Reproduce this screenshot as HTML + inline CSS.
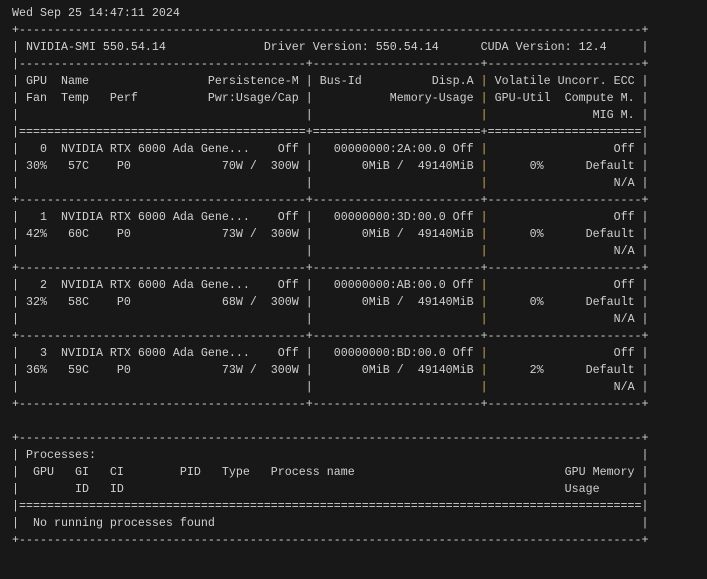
<!DOCTYPE html>
<html><head><meta charset="utf-8"><style>
html,body{margin:0;padding:0;background:#181818;width:707px;height:579px;overflow:hidden}
pre{margin:0;padding:5px 0 0 12px;font-family:"Liberation Mono",monospace;font-size:11.66px;line-height:17px;color:#d0d0d0;white-space:pre}
.y{color:#cfa84f}
</style></head><body><pre>Wed Sep 25 14:47:11 2024
+-----------------------------------------------------------------------------------------+
| NVIDIA-SMI 550.54.14              Driver Version: 550.54.14      CUDA Version: 12.4     |
|-----------------------------------------+------------------------+----------------------+
| GPU  Name                 Persistence-M | Bus-Id          Disp.A <span class="y">|</span> Volatile Uncorr. ECC |
| Fan  Temp   Perf          Pwr:Usage/Cap |           Memory-Usage <span class="y">|</span> GPU-Util  Compute M. |
|                                         |                        <span class="y">|</span>               MIG M. |
|=========================================+========================+======================|
|   0  NVIDIA RTX 6000 Ada Gene...    Off |   00000000:2A:00.0 Off <span class="y">|</span>                  Off |
| 30%   57C    P0             70W /  300W |       0MiB /  49140MiB <span class="y">|</span>      0%      Default |
|                                         |                        <span class="y">|</span>                  N/A |
+-----------------------------------------+------------------------+----------------------+
|   1  NVIDIA RTX 6000 Ada Gene...    Off |   00000000:3D:00.0 Off <span class="y">|</span>                  Off |
| 42%   60C    P0             73W /  300W |       0MiB /  49140MiB <span class="y">|</span>      0%      Default |
|                                         |                        <span class="y">|</span>                  N/A |
+-----------------------------------------+------------------------+----------------------+
|   2  NVIDIA RTX 6000 Ada Gene...    Off |   00000000:AB:00.0 Off <span class="y">|</span>                  Off |
| 32%   58C    P0             68W /  300W |       0MiB /  49140MiB <span class="y">|</span>      0%      Default |
|                                         |                        <span class="y">|</span>                  N/A |
+-----------------------------------------+------------------------+----------------------+
|   3  NVIDIA RTX 6000 Ada Gene...    Off |   00000000:BD:00.0 Off <span class="y">|</span>                  Off |
| 36%   59C    P0             73W /  300W |       0MiB /  49140MiB <span class="y">|</span>      2%      Default |
|                                         |                        <span class="y">|</span>                  N/A |
+-----------------------------------------+------------------------+----------------------+

+-----------------------------------------------------------------------------------------+
| Processes:                                                                              |
|  GPU   GI   CI        PID   Type   Process name                              GPU Memory |
|        ID   ID                                                               Usage      |
|=========================================================================================|
|  No running processes found                                                             |
+-----------------------------------------------------------------------------------------+</pre></body></html>
